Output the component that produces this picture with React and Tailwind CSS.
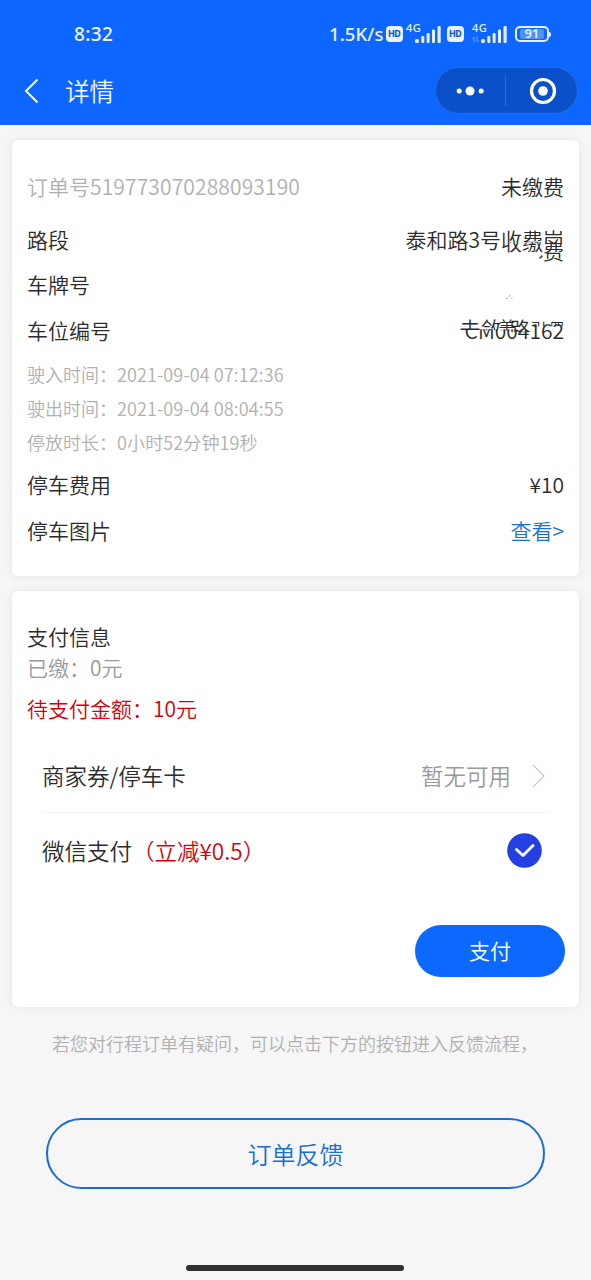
import { clsx as cn } from "clsx"

const TIMES = [
  { label: "驶入时间", value: "2021-09-04 07:12:36" },
  { label: "驶出时间", value: "2021-09-04 08:04:55" },
  { label: "停放时长", value: "0小时52分钟19秒" },
]

function Signal() {
  return (
    <svg width="27" height="17" viewBox="0 0 27 17" fill="#e4efff">
      <rect x="0" y="13" width="4" height="4" rx="1.6" />
      <rect x="6.3" y="10" width="3" height="7" rx="1" />
      <rect x="11.6" y="7" width="3" height="10" rx="1" />
      <rect x="17" y="3.5" width="3" height="13.5" rx="1" />
      <rect x="22.5" y="0" width="3.2" height="17" rx="1" />
    </svg>
  )
}

function HdBadge({ className }) {
  return (
    <span
      className={cn(
        "flex h-[16px] w-[17px] items-center justify-center rounded-[4px] bg-[#e8f1ff] font-['Inter'] text-[8.5px] font-extrabold leading-none text-[#1557c8]",
        className
      )}
    >
      HD
    </span>
  )
}

function StatusBar() {
  return (
    <div className="flex h-[56px] items-start text-[#eaf3ff]">
      <span className="ml-[74px] mt-[22px] w-[255px] font-['Noto_Sans','Noto_Sans_CJK_SC',sans-serif] text-[19px] font-medium leading-[24px] tracking-[0.4px]">8:32</span>
      <span className="mt-[22px] w-[57px] whitespace-nowrap font-['Noto_Sans','Noto_Sans_CJK_SC',sans-serif] text-[18.5px] font-medium leading-[24px] tracking-[0.1px]">1.5K/s</span>
      <HdBadge className="mt-[26px]" />
      <div className="relative ml-[12px] mt-[26px] h-[17px] w-[27px]">
        <Signal />
        <span className="absolute -left-[9px] -top-[4px] font-['Noto_Sans',sans-serif] text-[11px] font-medium leading-none tracking-[0.4px]">4G</span>
      </div>
      <HdBadge className="ml-[5px] mt-[26px]" />
      <div className="relative ml-[17px] mt-[26px] h-[17px] w-[27px]">
        <Signal />
        <span className="absolute -left-[9px] -top-[4px] font-['Noto_Sans',sans-serif] text-[11px] font-medium leading-none tracking-[0.4px]">4G</span>
        <svg className="absolute -left-[9px] top-[10px] opacity-40" width="7" height="7" viewBox="0 0 7 7" fill="none" stroke="#e4efff">
          <path d="M2 6.5V1L.5 3M5 .5V6l1.5-2" />
        </svg>
      </div>
      <div className="ml-[7px] mt-[26px] flex items-center">
        <div className="flex h-[16px] w-[34px] items-center justify-center rounded-[5px] border-2 border-[#e4efff] p-[1px]">
          <span className="flex h-full w-[24px] items-center justify-center rounded-[2px] bg-[#4f91ff] font-['Noto_Sans',sans-serif] text-[12.5px] font-semibold leading-none">91</span>
        </div>
        <div className="h-[5px] w-[2px] rounded-r bg-[#e4efff]" />
      </div>
    </div>
  )
}

function NavBar() {
  return (
    <div className="flex h-[69px] items-center text-[#f2f8ff]">
      <svg className="ml-[24px]" width="16" height="26" viewBox="0 0 16 26" fill="none" stroke="currentColor" strokeWidth="2">
        <path d="M13.5 1.5 2 13l11.5 11.5" />
      </svg>
      <h1 className="ml-[25px] flex-1 pt-px text-[24.5px] leading-none">详情</h1>
      <div className="mr-[13px] flex h-[47px] w-[143px] items-center rounded-full border border-[#2a6ae0] bg-[#0a50c8]">
        <svg className="ml-[20px]" width="30" height="12" viewBox="0 0 30 12" fill="#fff">
          <circle cx="3.2" cy="6" r="2.5" />
          <circle cx="14" cy="6" r="4.5" />
          <circle cx="25.2" cy="6" r="2.5" />
        </svg>
        <div className="ml-[19px] h-[30px] w-px bg-[#2f6bd3]" />
        <svg className="ml-[23px]" width="28" height="28" viewBox="0 0 28 28" fill="none">
          <circle cx="14" cy="14" r="11.5" stroke="#fff" strokeWidth="3.2" />
          <circle cx="14" cy="14" r="4.8" fill="#fff" />
        </svg>
      </div>
    </div>
  )
}

function Row({ label, children, className }) {
  return (
    <div className={cn("flex h-[45.5px] items-center justify-between text-[21px] text-[#2b2b2b]", className)}>
      <span>{label}</span>
      {children}
    </div>
  )
}

// the last characters of the road name run into each other
function RoadName() {
  return (
    <span className="relative flex leading-[30px]">
      <span>泰和路3号</span>
      <span className="[clip-path:inset(0_0_12px_0)]">收费</span>
      <span className="[clip-path:inset(0_0_10px_0)]">岗</span>
      <span className="absolute right-[21px] top-[2px] [clip-path:inset(16px_0_0_0)]">收缴</span>
      <span className="absolute right-0 top-[11px] [clip-path:inset(7px_0_0_0)]">费</span>
      <span className="absolute right-[21px] top-[32px] h-[2px] w-[4px] -rotate-45 bg-[#555]" />
    </span>
  )
}

// same here, the name lies over the upper half of the number
function SpaceNo() {
  return (
    <span className="relative flex leading-[30px]">
      <span className="[clip-path:inset(14px_0_0_0)]">CM004</span>
      <span className="[clip-path:inset(9px_0_0_0)]">162</span>
      <span className="absolute -left-[5px] -top-[2px] whitespace-nowrap [clip-path:inset(0_0_13px_0)]">去敛</span>
      <span className="absolute left-[34px] -top-[3px] text-[17px] [clip-path:inset(0_0_12px_0)]">美</span>
      <span className="absolute left-[45px] -top-[2px] [clip-path:inset(0_0_11px_0)]">路</span>
      <span className="absolute left-[66px] -top-[2px] text-[16px] [clip-path:inset(0_0_17px_0)]">引</span>
      <span className="absolute right-0 -top-[3px] text-[14px] [clip-path:inset(0_0_16px_0)]">四</span>
    </span>
  )
}

function OrderCard() {
  return (
    <section className="mx-[12px] mt-[15px] h-[436px] rounded-[6px] bg-white px-[15px] pt-[24px] shadow-[0_0_8px_rgba(0,0,0,0.08)]">
      <div className="flex h-[46px] items-center justify-between text-[21px]">
        <span className="text-[#b0b0b0]">
          订单号<span className="tracking-[0.14px]">519773070288093190</span>
        </span>
        <span className="text-[#2b2b2b]">未缴费</span>
      </div>
      <Row label="路段" className="mt-[6.5px]">
        <RoadName />
      </Row>
      <Row label="车牌号">
        <svg className="mr-[51px] mt-[24px]" width="8" height="5" viewBox="0 0 8 5" fill="none" stroke="#aaa">
          <path d="M1 4.5h2M4 3l1-2M6 4h1.5" />
        </svg>
      </Row>
      <Row label="车位编号">
        <SpaceNo />
      </Row>
      <div className="my-[3.5px]">
        {TIMES.map(({ label, value }) => (
          <p key={label} className="h-[34px] text-[18px] leading-[34px] text-[#b0b0b0]">
            {label}：<span className="tracking-[0.13px]">{value}</span>
          </p>
        ))}
      </div>
      <Row label="停车费用">
        <span>¥10</span>
      </Row>
      <Row label="停车图片">
        <a className="text-[#1673d2]">查看&gt;</a>
      </Row>
    </section>
  )
}

function PayCard() {
  return (
    <section className="mx-[12px] mt-[15px] flex h-[416px] flex-col rounded-[6px] bg-white px-[15px] pt-[30px] text-[21px] text-[#2b2b2b] shadow-[0_0_8px_rgba(0,0,0,0.08)]">
      <h2 className="leading-[31px]">支付信息</h2>
      <p className="leading-[31px] text-[#999]">已缴：0元</p>
      <p className="mt-[10px] leading-[31px] text-[#d9000b]">待支付金额：10元</p>
      <div className="ml-[15px] mr-[14px] mt-[14px] flex h-[75px] items-center border-b border-[#f2f2f2] pt-px text-[22.5px]">
        <span className="flex-1">商家券/停车卡</span>
        <span className="text-[#999]">暂无可用</span>
        <svg className="ml-[20px] mr-[3px]" width="16" height="26" viewBox="0 0 16 26" fill="none" stroke="#c8c8c8" strokeWidth="1.3">
          <path d="M2 2l11 11L2 24" />
        </svg>
      </div>
      <div className="ml-[15px] mr-[14px] flex h-[76px] items-center justify-between pr-[8px] text-[22.5px]">
        <span>
          微信支付<span className="text-[#d9000b]">（立减¥0.5）</span>
        </span>
        <svg className="-mt-[2px]" width="35" height="35" viewBox="0 0 35 35" fill="none">
          <circle cx="17.5" cy="17.5" r="17.3" fill="#2440e0" />
          <path d="M9.5 16.5l6.5 6 10-10" stroke="#f4f6ff" strokeWidth="3" strokeLinecap="round" strokeLinejoin="round" />
        </svg>
      </div>
      <button className="-mr-px mt-[36px] h-[52px] w-[150px] self-end rounded-full bg-[#0d68ff] text-[21px] text-white">支付</button>
    </section>
  )
}

export default function App() {
  return (
    <div className="flex h-[1280px] w-[591px] flex-col overflow-hidden bg-[#f6f6f6] font-['Noto_Sans_CJK_SC',sans-serif] font-[350]">
      <header className="h-[125px] bg-[#0d66ff]">
        <StatusBar />
        <NavBar />
      </header>
      <OrderCard />
      <PayCard />
      <p className="ml-[52px] mt-[23px] whitespace-nowrap text-[18px] leading-[26px] text-[#b0b0b0]">
        若您对行程订单有疑问，可以点击下方的按钮进入反馈流程，
      </p>
      <button className="mx-[46px] mt-[62px] h-[71px] shrink-0 rounded-full border-2 border-[#1b6dd2] text-[24px] text-[#1b6dd2]">订单反馈</button>
      <div className="ml-[186px] mt-[76px] h-[6px] w-[218px] rounded-full bg-[#303030]" />
    </div>
  )
}
